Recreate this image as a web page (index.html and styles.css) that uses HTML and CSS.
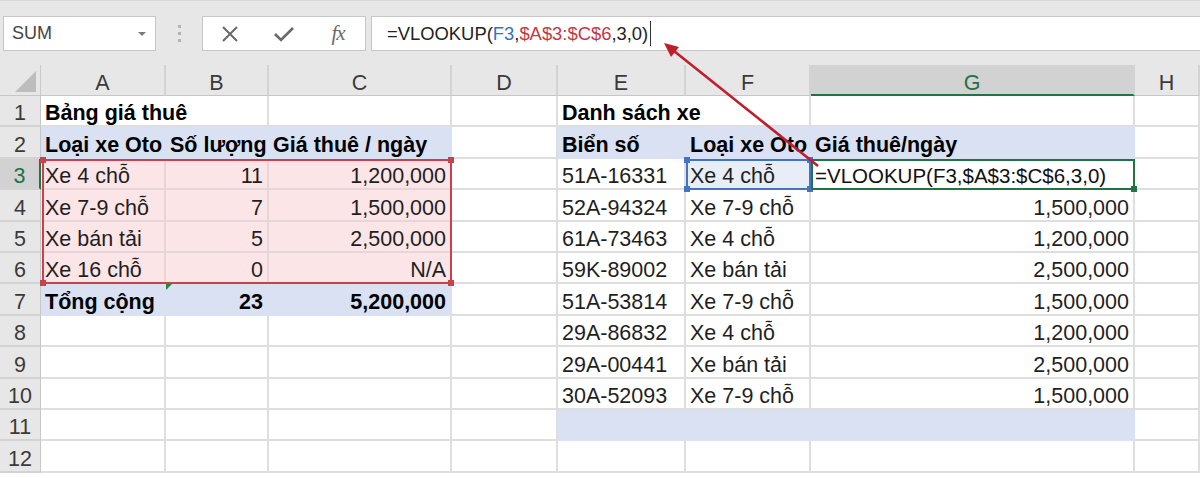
FILE: index.html
```html
<!DOCTYPE html>
<html lang="vi">
<head>
<meta charset="utf-8">
<title>Excel VLOOKUP</title>
<link rel="stylesheet" href="styles.css">
</head>
<body>
<div class="toolbar">
  <div class="namebox"><span class="nb-text">SUM</span><span class="nb-arrow"></span></div>
  <div class="dots"><i></i><i></i><i></i></div>
  <div class="fxbox">
    <span class="fx-slot"><svg width="18" height="18" viewBox="0 0 18 18"><path d="M2 2 L16 16 M16 2 L2 16" stroke="#6a6a6a" stroke-width="2" fill="none"/></svg></span>
    <span class="fx-slot"><svg width="22" height="18" viewBox="0 0 22 18"><path d="M2 9 L8 15 L20 3" stroke="#6a6a6a" stroke-width="2.6" fill="none"/></svg></span>
    <span class="fx-slot fx-text">fx</span>
  </div>
  <div class="formula">=VLOOKUP(<span class="ref-blue">F3</span>,<span class="ref-red">$A$3:$C$6</span>,3,0)<span class="caret"></span></div>
</div>

<div class="sheet-wrap">
<div class="sheet">
  <!-- header row -->
  <div class="corner"><svg width="41" height="31" viewBox="0 0 41 31"><polygon points="15,27 36,27 36,6" fill="#bdbdbd"/></svg></div>
  <div class="ch">A</div>
  <div class="ch">B</div>
  <div class="ch">C</div>
  <div class="ch">D</div>
  <div class="ch">E</div>
  <div class="ch">F</div>
  <div class="ch ch-sel">G</div>
  <div class="ch">H</div>

  <!-- row 1 -->
  <div class="rh">1</div>
  <div class="c b span2">Bảng giá thuê</div>
  <div class="c"></div>
  <div class="c"></div>
  <div class="c b span2">Danh sách xe</div>
  <div class="c"></div>
  <div class="c"></div>

  <!-- row 2 -->
  <div class="rh">2</div>
  <div class="c b blue">Loại xe Oto</div>
  <div class="c b blue">Số lượng</div>
  <div class="c b blue">Giá thuê / ngày</div>
  <div class="c"></div>
  <div class="c b blue">Biển số</div>
  <div class="c b blue">Loại xe Oto</div>
  <div class="c b blue">Giá thuê/ngày</div>
  <div class="c"></div>

  <!-- row 3 -->
  <div class="rh rh-sel">3</div>
  <div class="c pink">Xe 4 chỗ</div>
  <div class="c pink r">11</div>
  <div class="c pink r">1,200,000</div>
  <div class="c"></div>
  <div class="c">51A-16331</div>
  <div class="c lightblue">Xe 4 chỗ</div>
  <div class="c formula-cell">=VLOOKUP(F3,$A$3:$C$6,3,0)</div>
  <div class="c"></div>

  <!-- row 4 -->
  <div class="rh">4</div>
  <div class="c pink">Xe 7-9 chỗ</div>
  <div class="c pink r">7</div>
  <div class="c pink r">1,500,000</div>
  <div class="c"></div>
  <div class="c">52A-94324</div>
  <div class="c">Xe 7-9 chỗ</div>
  <div class="c r">1,500,000</div>
  <div class="c"></div>

  <!-- row 5 -->
  <div class="rh">5</div>
  <div class="c pink">Xe bán tải</div>
  <div class="c pink r">5</div>
  <div class="c pink r">2,500,000</div>
  <div class="c"></div>
  <div class="c">61A-73463</div>
  <div class="c">Xe 4 chỗ</div>
  <div class="c r">1,200,000</div>
  <div class="c"></div>

  <!-- row 6 -->
  <div class="rh">6</div>
  <div class="c pink">Xe 16 chỗ</div>
  <div class="c pink r">0</div>
  <div class="c pink r">N/A</div>
  <div class="c"></div>
  <div class="c">59K-89002</div>
  <div class="c">Xe bán tải</div>
  <div class="c r">2,500,000</div>
  <div class="c"></div>

  <!-- row 7 -->
  <div class="rh">7</div>
  <div class="c b blue">Tổng cộng</div>
  <div class="c b blue r err">23</div>
  <div class="c b blue r">5,200,000</div>
  <div class="c"></div>
  <div class="c">51A-53814</div>
  <div class="c">Xe 7-9 chỗ</div>
  <div class="c r">1,500,000</div>
  <div class="c"></div>

  <!-- row 8 -->
  <div class="rh">8</div>
  <div class="c"></div>
  <div class="c"></div>
  <div class="c"></div>
  <div class="c"></div>
  <div class="c">29A-86832</div>
  <div class="c">Xe 4 chỗ</div>
  <div class="c r">1,200,000</div>
  <div class="c"></div>

  <!-- row 9 -->
  <div class="rh">9</div>
  <div class="c"></div>
  <div class="c"></div>
  <div class="c"></div>
  <div class="c"></div>
  <div class="c">29A-00441</div>
  <div class="c">Xe bán tải</div>
  <div class="c r">2,500,000</div>
  <div class="c"></div>

  <!-- row 10 -->
  <div class="rh">10</div>
  <div class="c"></div>
  <div class="c"></div>
  <div class="c"></div>
  <div class="c"></div>
  <div class="c">30A-52093</div>
  <div class="c">Xe 7-9 chỗ</div>
  <div class="c r">1,500,000</div>
  <div class="c"></div>

  <!-- row 11 -->
  <div class="rh">11</div>
  <div class="c"></div>
  <div class="c"></div>
  <div class="c"></div>
  <div class="c"></div>
  <div class="c blue"></div>
  <div class="c blue"></div>
  <div class="c blue"></div>
  <div class="c"></div>

  <!-- row 12 -->
  <div class="rh">12</div>
  <div class="c"></div>
  <div class="c"></div>
  <div class="c"></div>
  <div class="c"></div>
  <div class="c"></div>
  <div class="c"></div>
  <div class="c"></div>
  <div class="c"></div>
</div>

<!-- selection overlays, drawn on a grid layer above the sheet -->
<div class="overlay-grid">
  <div class="sel sel-red"><i class="h tl"></i><i class="h tr"></i><i class="h bl"></i><i class="h br"></i></div>
  <div class="sel sel-blue"><i class="h tl"></i><i class="h tr"></i><i class="h bl"></i><i class="h br"></i></div>
  <div class="sel sel-green"><i class="h br"></i></div>
</div>
</div>

<svg class="arrow" width="1200" height="478" viewBox="0 0 1200 478">
  <line x1="818" y1="166" x2="674" y2="51" stroke="#bf1e2e" stroke-width="2.6"/>
  <polygon points="664,43 679,47 671,57" fill="#bf1e2e"/>
</svg>
</body>
</html>
```

FILE: styles.css
```css
html, body {
  margin: 0;
  padding: 0;
}
body {
  width: 1200px;
  height: 478px;
  overflow: hidden;
  position: relative;
  background: #ffffff;
  font-family: "Liberation Sans", Arial, sans-serif;
  color: #1f1f1f;
}

/* ---------- toolbar ---------- */
.toolbar {
  height: 65px;
  box-sizing: border-box;
  background: #e7e7e7;
  border-top: 1px solid #d8d8d8;
  padding-top: 15px;
  display: flex;
  align-items: flex-start;
}
.namebox {
  margin-left: 3px;
  width: 153px;
  height: 35px;
  box-sizing: border-box;
  background: #ffffff;
  border: 1px solid #c6c6c6;
  display: flex;
  align-items: center;
  justify-content: space-between;
  padding: 0 9px 0 8px;
}
.nb-text {
  font-size: 18px;
  color: #444444;
  line-height: 33px;
}
.nb-arrow {
  width: 0;
  height: 0;
  border-left: 4px solid transparent;
  border-right: 4px solid transparent;
  border-top: 4px solid #7a7a7a;
}
.dots {
  width: 46px;
  height: 35px;
  display: flex;
  flex-direction: column;
  align-items: center;
  justify-content: center;
  gap: 4px;
}
.dots i {
  display: block;
  width: 3px;
  height: 3px;
  background: #b3b3b3;
}
.fxbox {
  width: 164px;
  height: 35px;
  box-sizing: border-box;
  background: #ffffff;
  border: 1px solid #c6c6c6;
  display: flex;
  align-items: center;
}
.fx-slot {
  flex: 1;
  display: flex;
  justify-content: center;
  align-items: center;
}
.fx-text {
  font-family: "Liberation Serif", "Times New Roman", serif;
  font-style: italic;
  font-size: 21px;
  color: #6a6a6a;
  letter-spacing: -1px;
}
.formula {
  margin-left: 5px;
  flex: 1;
  height: 35px;
  box-sizing: border-box;
  background: #ffffff;
  border: 1px solid #c6c6c6;
  border-right: none;
  padding-left: 15px;
  font-size: 18.4px;
  line-height: 33px;
  color: #222222;
  white-space: nowrap;
  display: flex;
  align-items: center;
}
.ref-blue { color: #3a6ec6; }
.ref-red { color: #c4393f; }
.caret {
  display: inline-block;
  width: 1px;
  height: 25px;
  background: #333333;
  margin-left: 2px;
}

/* ---------- sheet ---------- */
.sheet-wrap {
  position: relative;
}
.sheet,
.overlay-grid {
  display: grid;
  grid-template-columns: 41px 125px 103px 183px 106px 128px 125px 324px 1fr;
  grid-template-rows: 31px repeat(12, 31.42px);
}
.overlay-grid {
  position: absolute;
  left: 0;
  top: 0;
  right: 0;
  pointer-events: none;
  z-index: 3;
}
.corner {
  background: #e7e7e7;
  border-right: 1px solid #c9c9c9;
  border-bottom: 1px solid #c6c6c6;
  box-sizing: border-box;
}
.corner svg { display: block; }
.ch {
  background: #e7e7e7;
  border-right: 2px solid #d3d3d3;
  border-bottom: 1px solid #c6c6c6;
  box-sizing: border-box;
  text-align: center;
  font-size: 21.5px;
  line-height: 24px;
  padding-top: 6px;
  color: #3a3a3a;
}
.ch-sel {
  background: #d2d2d2;
  color: #217346;
  border-bottom: 2px solid #217346;
}
.rh {
  grid-column: 1;
  background: #e7e7e7;
  border-right: 1px solid #c6c6c6;
  border-bottom: 2px solid #d3d3d3;
  box-sizing: border-box;
  display: flex;
  align-items: flex-end;
  justify-content: center;
  padding-bottom: 0;
  font-size: 21.5px;
  line-height: 24px;
  color: #3a3a3a;
}
.rh-sel {
  background: #d2d2d2;
  color: #217346;
  border-right: 2px solid #217346;
}
.c {
  box-sizing: border-box;
  border-right: 2px solid #dedede;
  border-bottom: 2px solid #dedede;
  display: flex;
  align-items: flex-end;
  padding: 0 4px 0 4px;
  font-size: 21.5px;
  line-height: 24px;
  white-space: nowrap;
  overflow: hidden;
  min-width: 0;
}
.span2 { grid-column: span 2; }
.r { justify-content: flex-end; }
.b { font-weight: bold; color: #000000; }
.blue {
  background: #d9e1f2;
  border-right-color: #d9e1f2;
  border-bottom-color: #d9e1f2;
}
.pink {
  background: #fbe5e6;
  border-right-color: #e6d6d7;
  border-bottom-color: #e6d6d7;
}
.lightblue {
  background: #e8eef8;
}
.formula-cell {
  font-size: 20.5px;
  color: #111111;
  padding-left: 4px;
}
.err { position: relative; }
.err::before {
  content: "";
  position: absolute;
  left: 0;
  top: 0;
  width: 0;
  height: 0;
  border-top: 6px solid #1f8a3c;
  border-right: 6px solid transparent;
}

/* ---------- selection overlays ---------- */
.sel {
  position: relative;
  box-sizing: border-box;
}
.sel-red {
  grid-column: 2 / 5;
  grid-row: 4 / 8;
  border: 2px solid #c8414b;
  margin-left: 1px;
}
.sel-blue {
  grid-column: 7 / 8;
  grid-row: 4 / 5;
  border: 2px solid #4472c4;
}
.sel-green {
  grid-column: 8 / 9;
  grid-row: 4 / 5;
  border: 2px solid #217346;
}
.h {
  position: absolute;
  width: 6px;
  height: 6px;
}
.sel-red .h { background: #c8414b; }
.sel-blue .h { background: #4472c4; }
.sel-green .h { background: #217346; }
.tl { left: -4px; top: -4px; }
.tr { right: -4px; top: -4px; }
.bl { left: -4px; bottom: -4px; }
.br { right: -4px; bottom: -4px; }

/* ---------- arrow ---------- */
.arrow {
  position: absolute;
  left: 0;
  top: 0;
  z-index: 5;
  pointer-events: none;
}
```
